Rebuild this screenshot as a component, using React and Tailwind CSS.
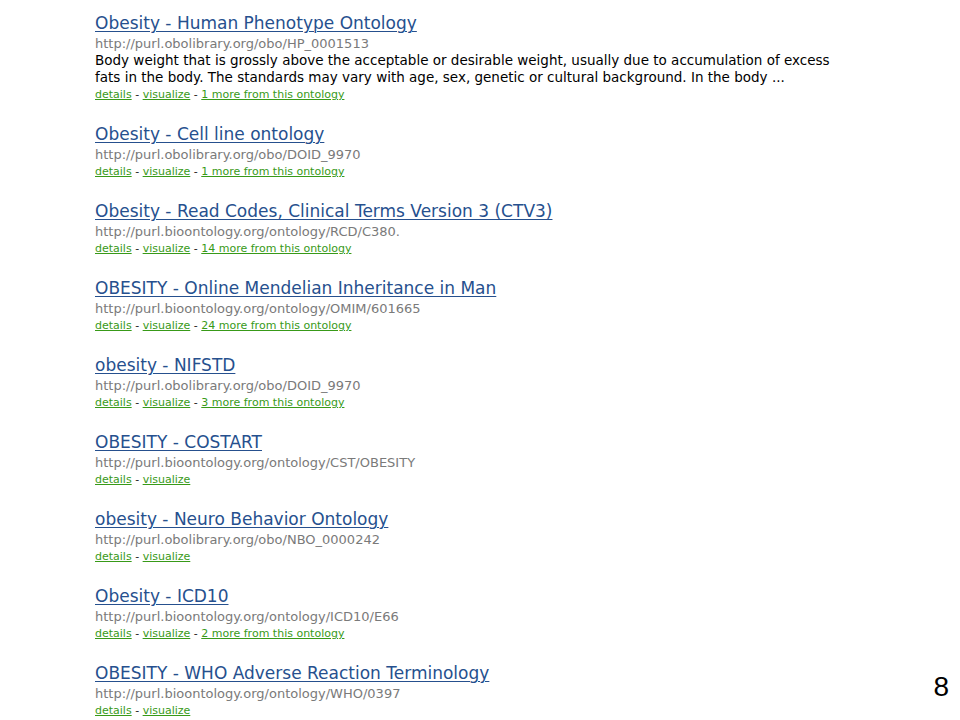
import React from "react";

const results = [
  {
    title: "Obesity - Human Phenotype Ontology",
    url: "http://purl.obolibrary.org/obo/HP_0001513",
    desc: [
      "Body weight that is grossly above the acceptable or desirable weight, usually due to accumulation of excess",
      "fats in the body. The standards may vary with age, sex, genetic or cultural background. In the body ...",
    ],
    more: "1 more from this ontology",
  },
  {
    title: "Obesity - Cell line ontology",
    url: "http://purl.obolibrary.org/obo/DOID_9970",
    more: "1 more from this ontology",
  },
  {
    title: "Obesity - Read Codes, Clinical Terms Version 3 (CTV3)",
    url: "http://purl.bioontology.org/ontology/RCD/C380.",
    more: "14 more from this ontology",
  },
  {
    title: "OBESITY - Online Mendelian Inheritance in Man",
    url: "http://purl.bioontology.org/ontology/OMIM/601665",
    more: "24 more from this ontology",
  },
  {
    title: "obesity - NIFSTD",
    url: "http://purl.obolibrary.org/obo/DOID_9970",
    more: "3 more from this ontology",
  },
  {
    title: "OBESITY - COSTART",
    url: "http://purl.bioontology.org/ontology/CST/OBESITY",
  },
  {
    title: "obesity - Neuro Behavior Ontology",
    url: "http://purl.obolibrary.org/obo/NBO_0000242",
  },
  {
    title: "Obesity - ICD10",
    url: "http://purl.bioontology.org/ontology/ICD10/E66",
    more: "2 more from this ontology",
  },
  {
    title: "OBESITY - WHO Adverse Reaction Terminology",
    url: "http://purl.bioontology.org/ontology/WHO/0397",
  },
];

const font = { fontFamily: '"DejaVu Sans", Verdana, sans-serif' };

function Result({ item }) {
  return (
    <div className="mb-[20px]">
      {/* title */}
      <a className="block text-[17px] leading-[23px] text-[#26508e] underline underline-offset-2 decoration-1 w-fit">
        {item.title}
      </a>
      <div className="text-[13px] leading-[17px] text-[#7a7a7a]">{item.url}</div>
      {item.desc && (
        <div className="text-[13.5px] leading-[17px] text-black">
          {item.desc.map((line) => (
            <div key={line}>{line}</div>
          ))}
        </div>
      )}
      {/* links */}
      <div className="text-[11px] leading-[17px] text-[#222]">
        <a className="text-[#389a18] underline">details</a>
        <span> - </span>
        <a className="text-[#389a18] underline">visualize</a>
        {item.more && (
          <>
            <span> - </span>
            <a className="text-[#389a18] underline">{item.more}</a>
          </>
        )}
      </div>
    </div>
  );
}

export default function App() {
  return (
    <div className="relative w-[960px] h-[720px] bg-white overflow-hidden" style={font}>
      <div className="pl-[95px] pt-[12px]">
        {results.map((r) => (
          <Result key={r.title} item={r} />
        ))}
      </div>
      <div
        className="absolute right-[11px] bottom-[12px] text-[28px] text-black"
        style={{ fontFamily: '"Liberation Sans", Arial, sans-serif' }}
      >
        8
      </div>
    </div>
  );
}
